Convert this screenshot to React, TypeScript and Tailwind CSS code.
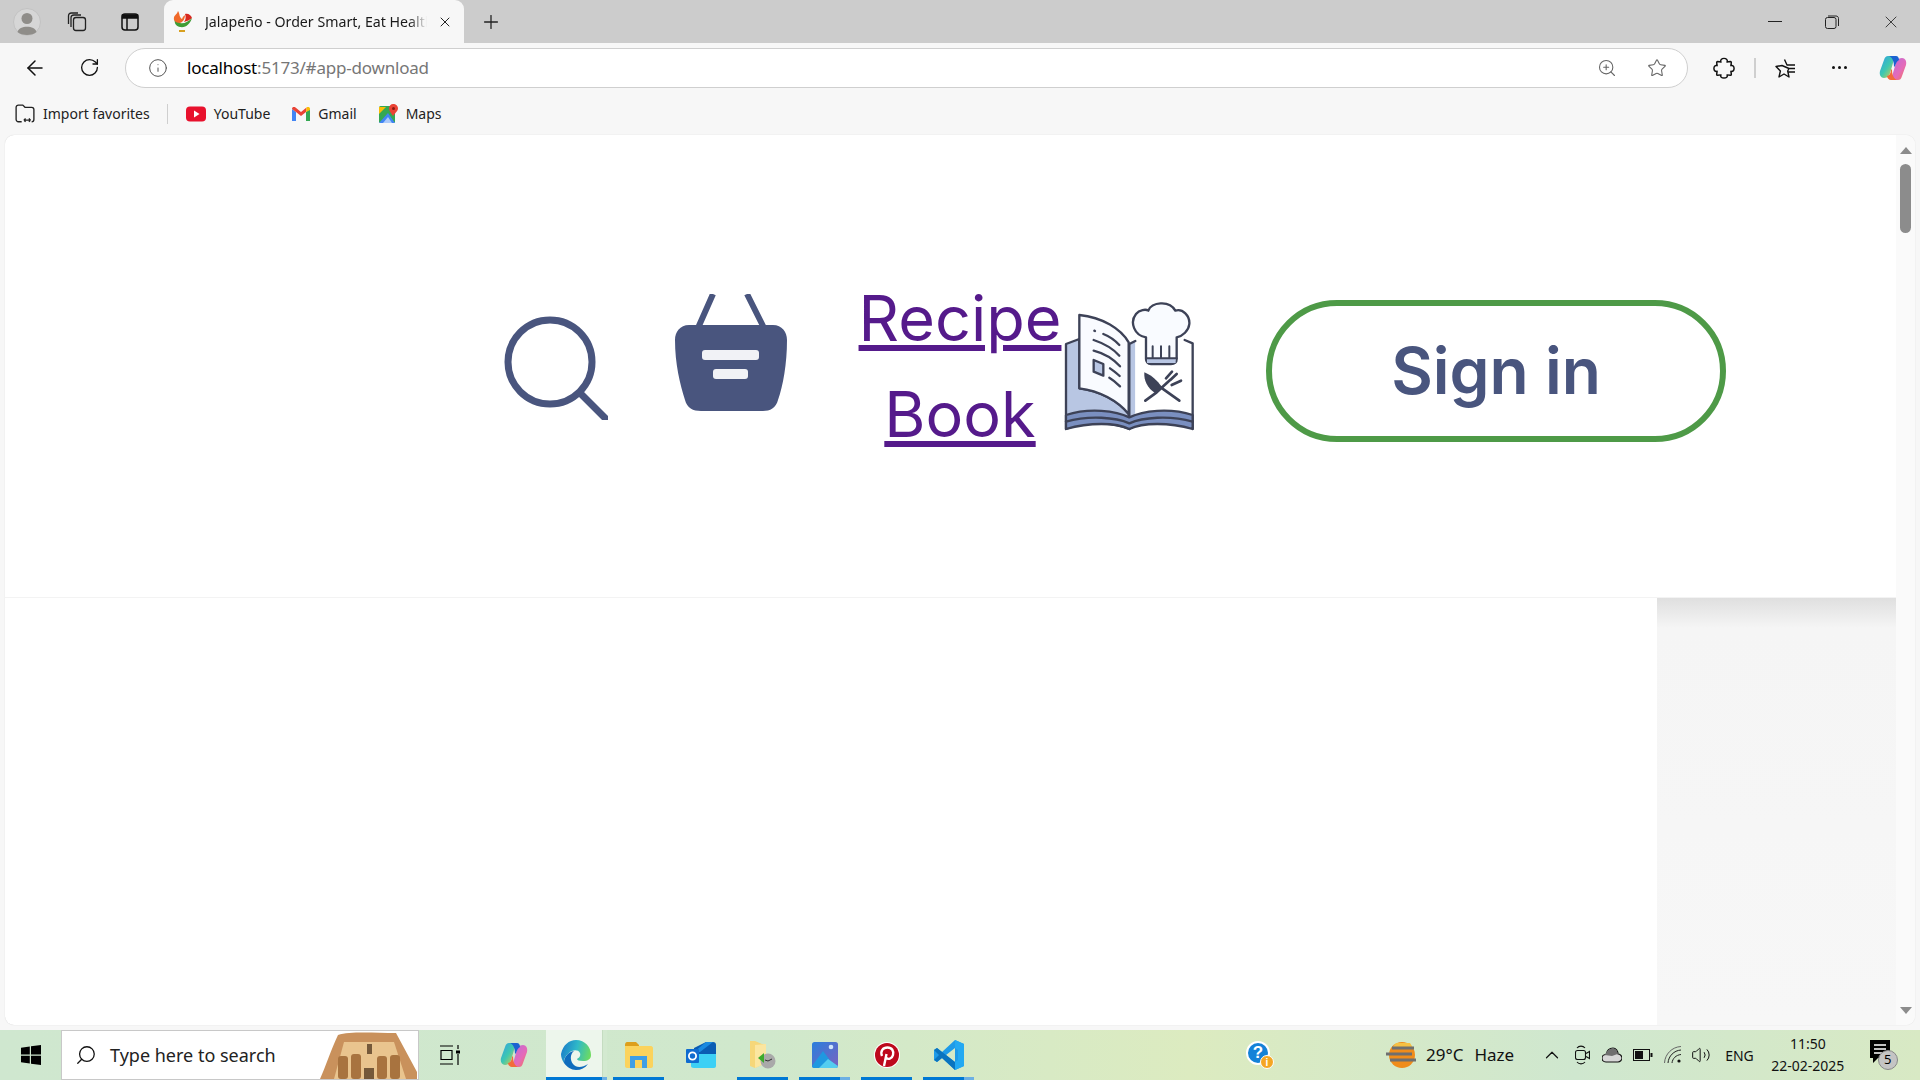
import { ArrowLeft, RotateCw, Info, ZoomIn, Star, X, Plus, Search, ChevronUp, Volume2 } from "lucide-react";

const Favicon = () => (
  <svg width="22" height="24" viewBox="0 0 22 24">
    <path d="M3 8 C2 12 3 16 8 17 C14 18 18 14 20 8 C16 12 12 14 8 13 Z" fill="#3f9c35" />
    <path d="M2 10 C1 5 5 5 6 1 C8 4 7 7 10 9 C11 6 12 6 13 5 C13 9 11 12 8 13 C5 13 3 12 2 10 Z" fill="#f0692a" />
    <path d="M13 4 C16 3 19 5 20 8 C18 10 15 11 12 12 C14 9 14 7 13 4 Z" fill="#d8281f" />
    <path d="M7 20 H13 V22 H7 Z" fill="#d8a020" />
  </svg>
);

const Profile = () => (
  <svg width="28" height="28" viewBox="0 0 28 28">
    <circle cx="14" cy="14" r="13.5" fill="#d6d6d6" stroke="#c2c2c2" />
    <circle cx="14" cy="10.5" r="5.5" fill="#8f8d89" />
    <path d="M4.5 24 C6 17 22 17 23.5 24 C20 28 8 28 4.5 24 Z" fill="#8f8d89" />
  </svg>
);

const Collections = () => (
  <svg width="22" height="22" viewBox="0 0 22 22" fill="none" stroke="#222" strokeWidth="1.3">
    <rect x="7.5" y="6.5" width="12" height="13" rx="2.5" />
    <path d="M5 16 V7 C5 5 6 4 8 4 H15" />
    <path d="M2.5 13 V5 C2.5 3 3.5 2 5.5 2 H12" />
  </svg>
);

const SidebarIcon = () => (
  <svg width="20" height="20" viewBox="0 0 20 20" fill="none" stroke="#111" strokeWidth="1.5">
    <rect x="2" y="2" width="16" height="16" rx="3" />
    <path d="M2.5 6 H17.5 V3 H2.5 Z" fill="#111" />
    <path d="M7 6 V18" />
  </svg>
);

const RestoreIcon = () => (
  <svg width="14" height="14" viewBox="0 0 14 14" fill="none" stroke="#222" strokeWidth="1">
    <rect x="0.5" y="2.5" width="10.5" height="11" rx="2" />
    <path d="M3 1 H11 C12.5 1 13.5 2 13.5 3.5 V11" />
  </svg>
);

const PuzzleIcon = () => (
  <svg width="22" height="22" viewBox="0 0 24 24" fill="none" stroke="#111" strokeWidth="1.6" strokeLinejoin="round">
    <path d="M8.7 5.5 C7.5 3.5 9.5 1.5 12 1.5 C14.5 1.5 16.5 3.5 15.3 5.5 L19 5 C19.5 5 20 5.5 20 6 L19.5 9.5 C21.5 8.5 23 10.5 23 12.5 C23 14.5 21.5 16.5 19.5 15.5 L20 19 C20 19.5 19.5 20 19 20 L15.3 19.5 C16.5 21.5 14.5 23 12 23 C9.5 23 7.5 21.5 8.7 19.5 L5 20 C4.5 20 4 19.5 4 19 L4.5 15.5 C2.5 16.5 1 14.5 1 12.5 C1 10.5 2.5 8.5 4.5 9.5 L4 6 C4 5.5 4.5 5 5 5 Z" />
  </svg>
);

const FavoritesIcon = () => (
  <svg width="22" height="22" viewBox="0 0 22 22" fill="none" stroke="#111" strokeWidth="1.4" strokeLinejoin="round">
    <path d="M9.5 2.5 L12 8 H20 M14.5 11.5 H20 M13.5 15 H20 M14 11.5 L12.7 14 L14 20 L9 17 L4 20 L5.4 14 L1 9.5 L7 8.5 Z" />
  </svg>
);

const Copilot = ({ size }: { size: number }) => (
  <svg width={size} height={size} viewBox="0 0 28 28">
    <defs>
      <linearGradient id={`cpa${size}`} x1="0" y1="0" x2="1" y2="1">
        <stop offset="0" stopColor="#2f9ee8" />
        <stop offset="0.5" stopColor="#3fc8b0" />
        <stop offset="1" stopColor="#f4cd34" />
      </linearGradient>
      <linearGradient id={`cpb${size}`} x1="0" y1="0" x2="1" y2="1">
        <stop offset="0" stopColor="#b86bde" />
        <stop offset="0.6" stopColor="#e56bb8" />
        <stop offset="1" stopColor="#f4734c" />
      </linearGradient>
    </defs>
    <path d="M9 2 H16 L12 16 C11 21 9 24 5 24 C2 24 0 21 1 17 L5 6 C6 3 7 2 9 2 Z" fill={`url(#cpa${size})`} />
    <path d="M19 26 H12 L16 12 C17 7 19 4 23 4 C26 4 28 7 27 11 L23 22 C22 25 21 26 19 26 Z" fill={`url(#cpb${size})`} />
    <path d="M10 2 H17 C19 2 20 4 20 6 C18 7 17 9 16 12 L15 13 C15 8 14 4 10 2 Z" fill="#1b62d1" />
    <path d="M18 26 H12 C10 26 8 24 8 22 C10 22 12 19 12 16 L13 15 C13 20 14 24 18 26 Z" fill="#f26b3a" />
  </svg>
);

const YouTube = () => (
  <svg width="20" height="16" viewBox="0 0 20 16">
    <rect width="20" height="15" y="0.5" rx="4" fill="#e8112d" />
    <path d="M8 4.5 L13.5 8 L8 11.5 Z" fill="#fff" />
  </svg>
);

const Gmail = () => (
  <svg width="18" height="14" viewBox="0 0 18 14">
    <path d="M0 2 V14 H4 V5 Z" fill="#4285f4" />
    <path d="M18 2 V14 H14 V5 Z" fill="#34a853" />
    <path d="M0 2 C0 0 2 -0.5 3.5 0.5 L9 5 L14.5 0.5 L14 5 L9 9 L4 5 Z" fill="#ea4335" />
    <path d="M14 5 L14.5 0.5 C16 -0.5 18 0 18 2 V3 Z" fill="#fbbc04" />
  </svg>
);

const Maps = () => (
  <svg width="20" height="20" viewBox="0 0 20 20">
    <rect y="2" width="16" height="17" rx="1.5" fill="#34a853" />
    <path d="M0 19 L9 9 L16 19 Z" fill="#4285f4" />
    <path d="M0 3 H7 L0 10 Z" fill="#fbbc04" />
    <path d="M4 19 L9 13 L13 19 Z" fill="#aecbfa" />
    <path d="M14 0 C17 0 19 2 19 4.5 C19 7 16 9 14 12 C12 9 10 7 10 4.5 C10 2 12 0 14 0 Z" fill="#ea4335" />
    <circle cx="14.5" cy="4.5" r="1.5" fill="#8c1a12" />
  </svg>
);

const ImportFav = () => (
  <svg width="20" height="20" viewBox="0 0 18 18" fill="none" stroke="#222" strokeWidth="1.2">
    <path d="M6 16 H3 C2 16 1 15 1 14 V3 C1 2 2 1 3 1 H7 L9 3 H15 C16 3 17 4 17 5 V14 C17 15 16 16 15 16" />
    <path d="M8 14.5 H14 M8 14.5 L9.5 13 M8 14.5 L9.5 16 M14 14.5 L12.5 13 M14 14.5 L12.5 16" />
  </svg>
);

const BigSearch = () => (
  <svg width="104" height="104" viewBox="0 0 104 104" fill="none" stroke="#49557e" strokeWidth="7" className="blur-[0.7px]">
    <circle cx="46" cy="46" r="42" />
    <path d="M77 78 L101 102" strokeLinecap="square" strokeWidth="7" />
  </svg>
);

const BigBasket = () => (
  <svg width="112" height="118" viewBox="0 0 112 118" className="blur-[0.7px]">
    <path d="M38 0 L23 34 M72 0 L89 34" stroke="#49557e" strokeWidth="6" fill="none" />
    <path d="M14 31 H98 C107 31 112 38 112 46 C112 70 108 92 103 106 C101 114 95 117 88 117 H26 C18 117 12 114 10 106 C5 90 0 70 0 46 C0 38 5 31 14 31 Z" fill="#49557e" />
    <rect x="27" y="56" width="57" height="10" rx="3" fill="#f1f2f6" />
    <rect x="38" y="75" width="35" height="10" rx="3" fill="#f1f2f6" />
  </svg>
);

const RecipeBook = () => (
  <svg width="136" height="136" viewBox="68 60 408 408" strokeLinejoin="round" strokeLinecap="round" className="blur-[0.3px]">
    <path d="M80 195 L120 180 V328 C180 335 235 365 268 405 L270 450 C220 430 140 425 80 450 Z" fill="#b8c6e3" stroke="#3d4257" strokeWidth="7" />
    <path d="M270 195 L288 186 V400 L270 450 Z" fill="#b8c6e3" />
    <path d="M288 186 V420 L460 420 V193 L436 183" fill="#fff" />
    <path d="M270 195 L288 186 M436 183 L460 193 V450 M270 195 V450" fill="none" stroke="#3d4257" strokeWidth="7" />
    <path d="M120 108 C190 115 245 150 268 190 V405 C235 365 180 335 120 328 Z" fill="#f9fbff" stroke="#3d4257" strokeWidth="7" />
    <path d="M80 408 C150 385 230 395 270 415 C310 395 390 385 460 408 V450 C390 430 310 430 270 450 C230 430 150 430 80 450 Z" fill="#7a8fc0" stroke="#3d4257" strokeWidth="7" />
    <path d="M80 428 C150 408 230 415 270 433 C310 415 390 408 460 428" fill="none" stroke="#3d4257" strokeWidth="7" />
    <path d="M165 155 L167 156 M192 165 C210 172 228 185 240 198 M163 183 C190 192 222 210 240 230 M163 215 C190 222 222 240 242 262 M212 268 C222 275 232 282 241 291 M210 296 C222 303 232 312 242 322" fill="none" stroke="#3d4257" strokeWidth="7" />
    <path d="M163 243 L192 255 V290 L163 278 Z" fill="#b8c6e3" stroke="#3d4257" strokeWidth="7" />
    <path d="M320 175 C285 170 270 130 290 105 C300 92 320 90 327 95 C335 70 390 62 408 95 C430 88 452 110 450 135 C448 155 430 172 412 175 V240 C412 250 405 255 395 255 H335 C325 255 320 248 320 240 Z" fill="#f9fbff" stroke="#3d4257" strokeWidth="7" />
    <rect x="323" y="238" width="86" height="14" fill="#b8c6e3" />
    <path d="M320 238 H412 M340 202 V236 M365 202 V236 M390 202 V236" stroke="#3d4257" strokeWidth="6" fill="none" />
    <path d="M315 280 C345 292 362 316 368 326 L347 342 C325 328 313 305 315 280 Z" fill="#3d4257" />
    <path d="M360 322 L420 365 M318 365 L352 340 L393 302 M380 298 L398 278 M393 303 L412 285 M397 318 L425 305" fill="none" stroke="#3d4257" strokeWidth="8" />
  </svg>
);

const WinLogo = () => (
  <svg width="20" height="20" viewBox="0 0 20 20" fill="#000">
    <path d="M0 2.8 L8.8 1.5 V9.5 H0 Z M10 1.3 L20 0 V9.5 H10 Z M0 10.7 H8.8 V18.5 L0 17.2 Z M10 10.7 H20 V20 L10 18.7 Z" />
  </svg>
);

const Temple = () => (
  <svg width="98" height="49" viewBox="0 0 98 49">
    <path d="M0 49 C6 36 10 22 18 5 C30 1 55 3 76 3 L97 42 V49 Z" fill="#c9915c" />
    <path d="M14 49 L24 12 H74 L86 49 Z" fill="#e9c48e" />
    <path d="M44 38 H54 V49 H44 Z M47 14 H52 V24 H47 Z" fill="#75593a" />
    <g fill="#a8733f">
      <rect x="18" y="26" width="10" height="23" rx="3" />
      <rect x="31" y="24" width="10" height="25" rx="3" />
      <rect x="57" y="26" width="10" height="23" rx="3" />
      <rect x="70" y="25" width="10" height="24" rx="3" />
    </g>
  </svg>
);

const TaskView = () => (
  <svg width="20" height="20" viewBox="0 0 20 20" fill="none" stroke="#000" strokeWidth="1.2">
    <path d="M0 1 H13 M0 19 H13 M1 5.5 H12 V14.5 H1 Z M18 0 V4 M18 9 V20" />
    <rect x="16" y="5.5" width="4" height="3" fill="#000" stroke="none" />
  </svg>
);

const Edge = () => (
  <svg width="30" height="30" viewBox="0 0 30 30">
    <defs>
      <linearGradient id="edge1" x1="0" y1="0.4" x2="1" y2="0.6">
        <stop offset="0" stopColor="#1b7fc9" />
        <stop offset="0.5" stopColor="#2fb9c8" />
        <stop offset="1" stopColor="#6fdc5e" />
      </linearGradient>
    </defs>
    <path d="M0 14 C2 5 8 0 15 0 C24 0 30 7 30 15 C30 19 27 21 22 21 C18 21 16 20 16 19 C18 18 20 16 19 13 C17 9 11 10 8 13 C4 16 3 19 3 23 C1 20 0 17 0 14 Z" fill="url(#edge1)" />
    <path d="M3 23 C3 17 7 12 13 11 C9 14 9 20 12 24 C15 28 21 28 27 24 C24 28 20 30 15 30 C10 30 6 27 3 23 Z" fill="#0f6cbd" />
  </svg>
);

const Explorer = () => (
  <svg width="28" height="26" viewBox="0 0 28 26">
    <path d="M0 3 C0 1 1 0 2 0 H11 L14 3 V8 H0 Z" fill="#dd9f1c" />
    <path d="M0 4 H26 C27 4 28 5 28 6 V24 C28 25 27 26 26 26 H2 C1 26 0 25 0 24 Z" fill="#fbd35c" />
    <path d="M5 26 V14 H22 V26 H17 V18 H10 V26 Z" fill="#3f9fe6" />
  </svg>
);

const Outlook = () => (
  <svg width="30" height="26" viewBox="0 0 30 26">
    <path d="M8 6 L20 0 H27 C29 0 30 1 30 3 V14 H8 Z" fill="#0a5cb3" />
    <path d="M20 0 H27 L14 10 H8 Z" fill="#1b8ae0" />
    <path d="M5 12 L30 12 V24 C30 25 29 26 28 26 H8 C6 26 5 25 5 24 Z" fill="#3dd0f5" />
    <rect x="0" y="7" width="13" height="14" rx="1" fill="#0f6cd0" />
    <circle cx="6.5" cy="14" r="3.6" fill="none" stroke="#fff" strokeWidth="1.8" />
  </svg>
);

const FolderClock = () => (
  <svg width="26" height="28" viewBox="0 0 26 28">
    <path d="M0 0 H5 L12 3 H16 V22 L5 27 L0 25 Z" fill="#f6d779" />
    <path d="M5 27 V4 L16 3 V22 Z" fill="#fbe6a0" />
    <circle cx="18" cy="20" r="7.5" fill="#a9a9a9" />
    <path d="M15 19 L18 20 L22 18" stroke="#333" strokeWidth="1" fill="none" />
    <path d="M8 17 L14 12 V22 Z" fill="#3cab2c" />
  </svg>
);

const Photos = () => (
  <svg width="26" height="26" viewBox="0 0 26 26">
    <defs>
      <linearGradient id="ph" x1="0" y1="0" x2="1" y2="1">
        <stop offset="0" stopColor="#2a7fdc" />
        <stop offset="1" stopColor="#7a62c0" />
      </linearGradient>
    </defs>
    <rect width="26" height="26" rx="2.5" fill="url(#ph)" />
    <circle cx="19" cy="5" r="2.3" fill="#cfe4fb" />
    <path d="M0 24 L11 9 L24 26 H2 C1 26 0 25 0 24 Z" fill="#1f98e0" />
    <path d="M7 26 L16 17 L26 24 C26 25 25 26 24 26 Z" fill="#54cdf0" />
  </svg>
);

const Pinterest = () => (
  <svg width="26" height="26" viewBox="0 0 26 26">
    <circle cx="13" cy="13" r="13" fill="#fff" />
    <circle cx="13" cy="13" r="12" fill="#bd081c" />
    <path d="M10 24 L12.5 12 M8 14 C6 9 9 5.5 13.5 5.5 C18 5.5 20 9 19 13 C18 17 14 18 12 15.5" fill="none" stroke="#fff" strokeWidth="2.4" />
  </svg>
);

const VSCode = () => (
  <svg width="30" height="30" viewBox="0 0 30 30">
    <path d="M21 0 L30 4 V26 L21 30 L8 18 L3 22 L0 20 V10 L3 8 L8 12 Z M21 8 L12 15 L21 22 Z" fill="#1e9be8" fillRule="evenodd" />
    <path d="M21 0 L30 4 V26 L21 30 Z M21 8 V22 L24 20 V10 Z" fill="#23a9f2" fillRule="evenodd" />
    <path d="M0 10 L3 8 L21 22 V30 L8 18 L3 22 L0 20 L5 15 Z" fill="#0a74bf" />
  </svg>
);

const HelpBadge = () => (
  <div className="relative w-[28px] h-[28px]">
    <div className="w-[24px] h-[24px] rounded-full bg-[#1482d8] border-2 border-white flex items-center justify-center text-white text-[17px] font-bold font-['Liberation_Sans',sans-serif]">?</div>
    <div className="absolute right-0 bottom-0 w-[14px] h-[14px] rounded-full bg-[#f5a623] border border-white flex items-center justify-center text-white text-[10px] font-bold font-['Liberation_Sans',sans-serif]">i</div>
  </div>
);

const Weather = () => (
  <svg width="30" height="26" viewBox="0 0 30 26">
    <ellipse cx="16" cy="13" rx="13" ry="13" fill="#f08c1a" />
    <path d="M10 1 H24 L27 6 H6 Z" fill="#f6c042" />
    <path d="M6 6 H28 M0 12 H26 M4 18 H30" stroke="#6f6f6f" strokeWidth="3" />
  </svg>
);

const Meet = () => (
  <svg width="15" height="20" viewBox="0 0 15 20" fill="none" stroke="#111" strokeWidth="1.1">
    <path d="M2 3 C4 0.5 8 0.5 10 3 M2 17 C4 19.5 8 19.5 10 17" />
    <rect x="0.5" y="5.5" width="10" height="9" rx="2" />
    <path d="M11 8.5 L14.5 6.5 V13.5 L11 11.5" />
  </svg>
);

const Cloud = () => (
  <svg width="20" height="16" viewBox="0 0 20 16">
    <path d="M4 15 C1 15 0 13 0 11 C0 9 2 7.5 4 7.5 C5 3 8 1 11 1 C14 1 16 4 16 7 C18 7 20 9 20 11 C20 13 18 15 16 15 Z" fill="#d7d7d7" stroke="#111" strokeWidth="1.1" />
    <path d="M3 8 C5 3 8 1.5 11 1.5 C14 1.5 15.5 4 15.5 7 L10 9 Z" fill="#6f6f6f" />
  </svg>
);

const Battery = () => (
  <svg width="20" height="12" viewBox="0 0 20 12">
    <rect x="0.5" y="0.5" width="16" height="11" fill="none" stroke="#111" />
    <rect x="2" y="2" width="8" height="8" fill="#111" />
    <rect x="17.5" y="4" width="2" height="4" fill="#111" />
  </svg>
);

const Wifi = () => (
  <svg width="18" height="18" viewBox="0 0 18 18" fill="none" stroke="#222" strokeWidth="1">
    <path d="M0.5 17 C1 8 8 1 17 0.5" stroke="#666" />
    <path d="M4 17 C4.5 10 10 4.5 17 4" />
    <path d="M8 17 C8.5 12.5 12 9 17 8.5" />
    <circle cx="15" cy="15" r="1.6" fill="#111" stroke="none" />
  </svg>
);

const Notification = () => (
  <div className="relative w-[28px] h-[30px]">
    <svg width="22" height="24" viewBox="0 0 22 24">
      <path d="M0 0 H20 V18 H8 L3 23 V18 H0 Z" fill="#000" />
      <path d="M4 5 H16 M4 9 H16 M4 13 H16" stroke="#fff" strokeWidth="1.3" />
    </svg>
    <div className="absolute right-0 bottom-0 w-[20px] h-[20px] rounded-full bg-[#c4c4c4] border border-[#888] flex items-center justify-center text-[13px] text-black font-['Noto_Sans',sans-serif]">5</div>
  </div>
);

const AppSlot = ({ bar, partial, children }: { bar?: boolean; partial?: boolean; children: React.ReactNode }) => (
  <div className="relative w-[51px] h-full flex items-center justify-center">
    {children}
    {bar && (
      <div className="absolute left-0 right-0 bottom-0 h-[3px] flex">
        <div className="flex-1 bg-[#0078d4]" />
        {partial && <div className="w-[10px] bg-[#6db0e4]" />}
      </div>
    )}
  </div>
);

const bookmarks = [
  { label: "YouTube", icon: <YouTube />, ml: "ml-[18px]", gap: "gap-[8px]" },
  { label: "Gmail", icon: <Gmail />, ml: "ml-[22px]", gap: "gap-[8px]" },
  { label: "Maps", icon: <Maps />, ml: "ml-[22px]", gap: "gap-[7px]" },
];

export default function App() {
  return (
    <div className="w-[1920px] h-[1080px] overflow-hidden flex flex-col bg-[#f7f7f7] font-['Noto_Sans',sans-serif]">
      {/* Tab strip */}
      <div className="h-[43px] shrink-0 bg-[#cccccc] flex items-center">
        <div className="ml-[13px] w-[28px] flex justify-center"><Profile /></div>
        <div className="ml-[25px] w-[22px]"><Collections /></div>
        <div className="ml-[32px] w-[20px]"><SidebarIcon /></div>
        <div className="ml-[24px] w-[300px] h-full bg-[#f7f7f7] rounded-t-[9px] flex items-center pl-[8px]">
          <Favicon />
          <span className="ml-[11px] w-[222px] overflow-hidden whitespace-nowrap text-[14.2px] text-[#1a1a1a] [mask-image:linear-gradient(90deg,#000_92%,transparent)]">Jalapeño - Order Smart, Eat Healthy</span>
          <X size={16} strokeWidth={1.5} className="ml-[10px] text-[#222]" />
        </div>
        <Plus size={22} strokeWidth={1.4} className="ml-[16px] text-[#222]" />
        <div className="ml-auto flex items-center">
          <div className="w-[14px] h-px bg-[#222] mr-[43px]" />
          <div className="mr-[42px]"><RestoreIcon /></div>
          <X size={20} strokeWidth={1} className="mr-[19px] text-[#222]" />
        </div>
      </div>

      {/* Address bar */}
      <div className="h-[49px] shrink-0 flex items-center">
        <ArrowLeft size={24} strokeWidth={1.5} className="ml-[23px] text-[#111]" />
        <RotateCw size={21} strokeWidth={1.5} className="ml-[32px] text-[#111]" />
        <div className="ml-[25px] w-[1563px] h-[40px] rounded-full bg-white border border-[#cfcfcf] flex items-center">
          <Info size={20} strokeWidth={1.2} className="ml-[22px] text-[#555]" />
          <span className="ml-[19px] text-[17px] tracking-[-0.2px] text-black">localhost<span className="text-[#767676]">:5173/#app-download</span></span>
          <ZoomIn size={20} strokeWidth={1.3} className="ml-auto text-[#666]" />
          <Star size={20} strokeWidth={1.3} className="ml-[30px] mr-[20px] text-[#666]" />
        </div>
        <div className="ml-[25px]"><PuzzleIcon /></div>
        <div className="ml-[19px] w-[2px] h-[20px] bg-[#cfcfcf]" />
        <div className="ml-[19px]"><FavoritesIcon /></div>
        <div className="ml-[35px] flex gap-[3px]">
          <div className="w-[3px] h-[3px] rounded-full bg-[#111]" />
          <div className="w-[3px] h-[3px] rounded-full bg-[#111]" />
          <div className="w-[3px] h-[3px] rounded-full bg-[#111]" />
        </div>
        <div className="ml-[32px]"><Copilot size={28} /></div>
      </div>

      {/* Bookmarks */}
      <div className="h-[43px] shrink-0 flex items-center text-[14px] text-[#222]">
        <div className="ml-[15px]"><ImportFav /></div>
        <span className="ml-[8px]">Import favorites</span>
        <div className="ml-[17px] w-px h-[20px] bg-[#cfcfcf]" />
        {bookmarks.map((b) => (
          <div key={b.label} className={`flex items-center ${b.ml} ${b.gap}`}>
            {b.icon}
            <span>{b.label}</span>
          </div>
        ))}
      </div>

      {/* Page viewport */}
      <div className="h-[890px] shrink-0 mx-[5px] rounded-[9px] bg-white flex overflow-hidden shadow-[0_0_1px_rgba(0,0,0,0.2)]">
        <div className="flex-1 flex flex-col">
          <header className="h-[463px] shrink-0 border-b border-[#f3f3f3] flex items-center pl-[499px] pt-[10px]">
            <div className="mb-[6px]"><BigSearch /></div>
            <div className="ml-[67px] mb-[36px]"><BigBasket /></div>
            <a href="#recipe" className="ml-[68px] mb-[10px] w-[210px] text-center text-[63px] leading-[96px] text-[#551a8b] underline font-['Inter',sans-serif]">Recipe Book</a>
            <div className="-ml-[3px] mb-[8px]"><RecipeBook /></div>
            <button className="ml-[68px] w-[460px] h-[142px] rounded-full border-[6px] border-[#4e9a47] bg-white text-[#49557e] text-[64px] font-semibold font-['Inter',sans-serif]">Sign in</button>
          </header>
          <div className="flex-1 flex justify-end">
            <div className="w-[239px] h-full bg-[linear-gradient(#dfdfdf,#f5f5f5_30px,#f7f7f7)]" />
          </div>
        </div>
        {/* Scrollbar */}
        <div className="w-[19px] shrink-0 bg-[#fafafa] flex flex-col items-center pt-[12px] pb-[11px]">
          <div className="w-0 h-0 border-x-[6px] border-x-transparent border-b-[7px] border-b-[#8c8c8c]" />
          <div className="mt-[10px] w-[11px] h-[69px] rounded-full bg-[#8c8c8c]" />
          <div className="mt-auto w-0 h-0 border-x-[6px] border-x-transparent border-t-[7px] border-t-[#8c8c8c]" />
        </div>
      </div>

      {/* Taskbar */}
      <div className="mt-[5px] h-[50px] shrink-0 flex items-center bg-[linear-gradient(90deg,#cfe7cf,#d0e8cc_40%,#dcebc0_62%,#cfe7cf_82%,#d8e9c4)]">
        <div className="w-[61px] flex justify-center"><WinLogo /></div>
        <div className="w-[358px] h-full bg-white border border-[#c8c8c8] flex items-center overflow-hidden">
          <Search size={22} strokeWidth={1.4} className="ml-[13px] -scale-x-100 text-[#111]" />
          <span className="ml-[13px] text-[18px] text-[#222] whitespace-nowrap">Type here to search</span>
          <div className="ml-auto self-end"><Temple /></div>
        </div>
        <div className="ml-[21px]"><TaskView /></div>
        <div className="ml-[40px]"><Copilot size={28} /></div>
        <div className="ml-[18px] w-[61px] h-full relative bg-[linear-gradient(90deg,#edf6ec_92%,#c5dcc1_92%,#c5dcc1_94%,#d3e9d0_94%)] flex items-center pl-[15px]">
          <Edge />
          <div className="absolute left-0 right-0 bottom-0 h-[3px] flex">
            <div className="flex-1 bg-[#0078d4]" />
            <div className="w-[5px] bg-[#6db0e4]" />
          </div>
        </div>
        <div className="ml-[6px] flex h-full gap-[11px]">
          <AppSlot bar><Explorer /></AppSlot>
          <AppSlot><Outlook /></AppSlot>
          <AppSlot bar><FolderClock /></AppSlot>
          <AppSlot bar partial><Photos /></AppSlot>
          <AppSlot bar><Pinterest /></AppSlot>
          <AppSlot bar partial><VSCode /></AppSlot>
        </div>
        <div className="ml-[272px]"><HelpBadge /></div>
        <div className="ml-[112px]"><Weather /></div>
        <span className="ml-[10px] text-[17px] text-[#111]">29°C</span>
        <span className="ml-[11px] text-[17px] text-[#111]">Haze</span>
        <ChevronUp size={22} strokeWidth={1.3} className="ml-[27px] text-[#111]" />
        <div className="ml-[12px]"><Meet /></div>
        <div className="ml-[12px]"><Cloud /></div>
        <div className="ml-[11px]"><Battery /></div>
        <div className="ml-[11px]"><Wifi /></div>
        <Volume2 size={20} strokeWidth={1.2} className="ml-[9px] text-[#111]" />
        <span className="ml-[14px] text-[14px] text-[#111]">ENG</span>
        <div className="ml-[15px] w-[78px] flex flex-col items-center text-[14px] leading-[22px] text-[#111]">
          <span>11:50</span>
          <span>22-02-2025</span>
        </div>
        <div className="ml-[23px]"><Notification /></div>
      </div>
    </div>
  );
}
